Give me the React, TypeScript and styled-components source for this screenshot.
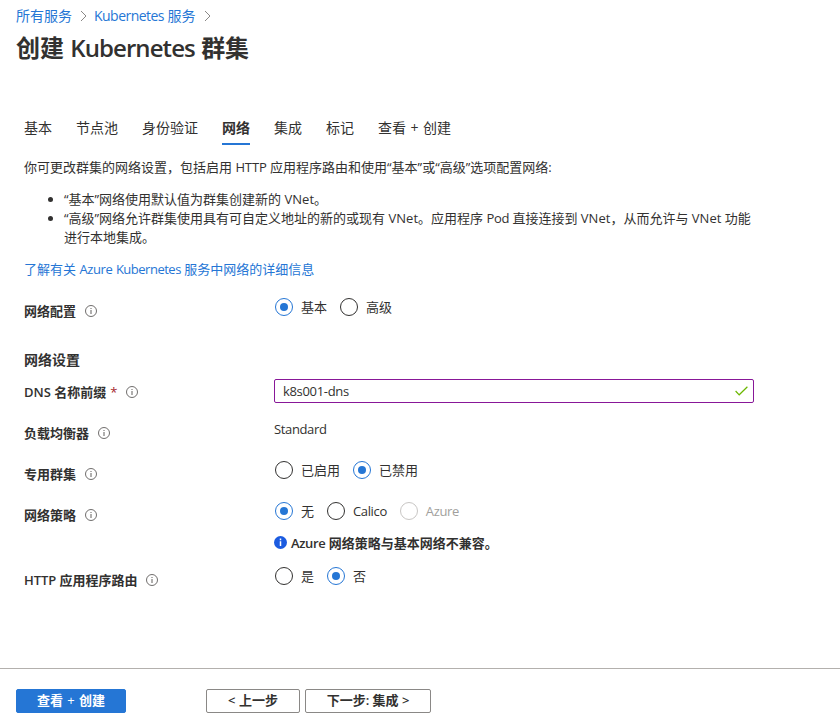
import React from 'react';
import styled, { createGlobalStyle, css } from 'styled-components';

const Global = createGlobalStyle`
  * { box-sizing: border-box; }
  body {
    margin: 0;
    background: #fff;
    color: #323130;
    font: 13px/19px "Open Sans", "Noto Sans CJK SC", sans-serif;
  }
`;

const Page = styled.div`
  width: 840px;
  height: 728px;
  display: flex;
  flex-direction: column;
  overflow: hidden;
`;
const Latin = styled.span<{ $spacing: number }>`
  letter-spacing: ${p => p.$spacing}em;
`;
const Crumbs = styled.nav`
  height: 32px;
  padding: 0 16px;
  display: flex;
  align-items: center;
  font-size: 14px;
  line-height: 20px;
`;
const Link = styled.a`
  color: #2576d5;
  text-decoration: none;
`;
const Chevron = styled.svg`
  width: 8px;
  height: 12px;
  margin: 0 7px;
  fill: none;
  stroke: #8a8886;
`;
const Title = styled.h1`
  margin: 0 16px;
  height: 34px;
  font-size: 24px;
  line-height: 32px;
  font-weight: 600;
`;
const Tabs = styled.div`
  display: flex;
  gap: 24px;
  margin: 50px 24px 0;
  height: 29px;
`;
const Tab = styled.div<{ $active?: boolean }>`
  font-size: 14px;
  line-height: 24px;
  white-space: nowrap;
  font-weight: ${p => (p.$active ? 600 : 400)};
  border-bottom: 2px solid ${p => (p.$active ? '#2576d5' : 'transparent')};
`;
const Intro = styled.section`
  padding: 13px 24px 0;
  height: 153px;
  white-space: nowrap;
`;
const Para = styled.p`
  margin: 0;
  height: 19px;
`;
const List = styled.ul`
  margin: 13px 0 13px;
  padding-left: 40px;
  line-height: 19px;
  list-style: none;
`;
const Item = styled.li`
  position: relative;
  &::before {
    content: '';
    position: absolute;
    left: -16px;
    top: 7px;
    width: 5px;
    height: 5px;
    border-radius: 50%;
    background: #323130;
  }
`;
const Form = styled.section`
  padding: 0 24px;
  height: 370px;
`;
const Row = styled.div<{ $height?: number }>`
  display: grid;
  grid-template-columns: 250px 480px;
  height: ${p => p.$height ?? 41}px;
  align-items: start;
`;
const Label = styled.div`
  display: flex;
  align-items: center;
  height: 19px;
  margin-top: 4px;
  font-weight: 600;
  white-space: pre;
`;
const Required = styled.span`
  color: #a4262c;
  margin-left: 4px;
  font-weight: 400;
`;
const HintIcon = styled.svg`
  width: 12px;
  height: 12px;
  margin: 0 0 2px 9px;
  flex: none;
`;
const SectionTitle = styled.h2`
  margin: 0;
  height: 29px;
  font-size: 14px;
  line-height: 20px;
  font-weight: 600;
`;
const Choices = styled.div`
  display: flex;
  gap: 13px;
  padding-left: 1px;
  height: 18px;
`;
const Choice = styled.label<{ $disabled?: boolean }>`
  display: flex;
  gap: 8px;
  align-items: center;
  line-height: 18px;
  color: ${p => (p.$disabled ? '#a19f9d' : '#323130')};
`;
const Dot = styled.span<{ $on?: boolean; $disabled?: boolean }>`
  display: flex;
  align-items: center;
  justify-content: center;
  width: 18px;
  height: 18px;
  border-radius: 50%;
  border: 1px solid ${p => (p.$on ? '#2576d5' : p.$disabled ? '#c8c6c4' : '#323130')};
  ${p => p.$on && css`
    &::after {
      content: '';
      width: 8px;
      height: 8px;
      border-radius: 50%;
      background: #2576d5;
    }
  `}
`;
const Field = styled.div`
  display: flex;
  align-items: center;
  justify-content: space-between;
  height: 24px;
  padding: 0 5px 0 8px;
  border: 1px solid #881798;
  border-radius: 2px;
`;
const Check = styled.svg`
  width: 13px;
  height: 10px;
  fill: none;
  stroke: #6bb700;
  stroke-width: 1.2;
`;
const Notice = styled.div`
  display: flex;
  align-items: center;
  gap: 4px;
  margin-top: 14px;
  height: 19px;
  font-weight: 600;
`;
const NoticeIcon = styled.svg`
  width: 13px;
  height: 13px;
  margin-bottom: 2px;
`;
const Footer = styled.footer`
  display: flex;
  padding: 20px 16px 0;
  border-top: 1px solid #b3b0ad;
`;
const Button = styled.button<{ $primary?: boolean; $width: number; $after?: number }>`
  width: ${p => p.$width}px;
  height: 24px;
  margin: 0 ${p => p.$after ?? 0}px 0 0;
  padding: 0 0 2px;
  font: inherit;
  font-weight: 600;
  line-height: 20px;
  white-space: nowrap;
  border-radius: 2px;
  border: 1px solid ${p => (p.$primary ? '#2576d5' : '#8a8886')};
  background: ${p => (p.$primary ? '#2576d5' : '#fff')};
  color: ${p => (p.$primary ? '#fff' : '#323130')};
`;
const Sign = styled.span`
  display: inline-block;
  width: 0.7em;
  text-align: center;
  font-weight: 400;
`;

const spacing: Record<string, number> = { Kubernetes: -0.038, VNet: 0.003, HTTP: -0.008, DNS: 0 };

/* Tunes the spacing of Latin words inside Chinese text, and gives a plus sign a fixed cell. */
const Mixed = ({ children }: { children: string }) => (
  <>
    {children.split(/([A-Za-z][A-Za-z0-9]*|\+)/).map((part, i) => {
      if (i % 2 === 0) return part;
      return part === '+'
        ? <Sign key={i}>+</Sign>
        : <Latin key={i} $spacing={spacing[part] ?? -0.028}>{part}</Latin>;
    })}
  </>
);

const Next = () => (
  <Chevron viewBox="0 0 8 12"><path d="M2 1 7 6 2 11" /></Chevron>
);
const Hint = () => (
  <HintIcon viewBox="0 0 12 12">
    <circle cx="6" cy="6" r="5.5" fill="none" stroke="#605e5c" strokeWidth=".9" />
    <path d="M6 5v4M6 3v1" stroke="#605e5c" />
  </HintIcon>
);

type Option = { text: string; on?: boolean; disabled?: boolean };
const Radios = ({ options }: { options: Option[] }) => (
  <Choices>
    {options.map(o => (
      <Choice key={o.text} $disabled={o.disabled}>
        <Dot $on={o.on} $disabled={o.disabled} />
        <span><Mixed>{o.text}</Mixed></span>
      </Choice>
    ))}
  </Choices>
);

const tabs = ['基本', '节点池', '身份验证', '网络', '集成', '标记', '查看 + 创建'];

export default function App() {
  return (
    <Page>
      <Global />
      <Crumbs>
        <Link>所有服务</Link><Next />
        <Link><Mixed>Kubernetes 服务</Mixed></Link><Next />
      </Crumbs>
      <Title><Mixed>创建 Kubernetes 群集</Mixed></Title>
      <Tabs>
        {tabs.map(t => <Tab key={t} $active={t === '网络'}><Mixed>{t}</Mixed></Tab>)}
      </Tabs>
      <Intro>
        <Para><Mixed>你可更改群集的网络设置，包括启用 HTTP 应用程序路由和使用“基本”或“高级”选项配置网络:</Mixed></Para>
        <List>
          <Item><Mixed>“基本”网络使用默认值为群集创建新的 VNet。</Mixed></Item>
          <Item>
            <Mixed>“高级”网络允许群集使用具有可自定义地址的新的或现有 VNet。应用程序 Pod 直接连接到 VNet，从而允许与 VNet 功能</Mixed>
            <br />进行本地集成。
          </Item>
        </List>
        <Link><Mixed>了解有关 Azure Kubernetes 服务中网络的详细信息</Mixed></Link>
      </Intro>
      <Form>
        <Row $height={52}>
          <Label>网络配置<Hint /></Label>
          <Radios options={[{ text: '基本', on: true }, { text: '高级' }]} />
        </Row>
        <SectionTitle>网络设置</SectionTitle>
        <Row>
          <Label><Mixed>DNS 名称前缀</Mixed><Required>*</Required><Hint /></Label>
          <Field>
            <Latin $spacing={-0.025}>k8s001-dns</Latin>
            <Check viewBox="0 0 13 10"><path d="M.6 5 4.2 8.8 12.4.8" /></Check>
          </Field>
        </Row>
        <Row>
          <Label>负载均衡器<Hint /></Label>
          <div><Mixed>Standard</Mixed></div>
        </Row>
        <Row>
          <Label>专用群集<Hint /></Label>
          <Radios options={[{ text: '已启用' }, { text: '已禁用', on: true }]} />
        </Row>
        <Row $height={65}>
          <Label>网络策略<Hint /></Label>
          <div>
            <Radios options={[{ text: '无', on: true }, { text: 'Calico' }, { text: 'Azure', disabled: true }]} />
            <Notice>
              <NoticeIcon viewBox="0 0 13 13">
                <circle cx="6.5" cy="6.5" r="6.5" fill="#1b5be0" />
                <path d="M6.5 5.3v4.6M6.5 2.6v1.6" stroke="#fff" strokeWidth="1.5" />
              </NoticeIcon>
              <span><Mixed>Azure 网络策略与基本网络不兼容。</Mixed></span>
            </Notice>
          </div>
        </Row>
        <Row>
          <Label><Mixed>HTTP 应用程序路由</Mixed><Hint /></Label>
          <Radios options={[{ text: '是' }, { text: '否', on: true }]} />
        </Row>
      </Form>
      <Footer>
        <Button $primary $width={110} $after={80}><Mixed>查看 + 创建</Mixed></Button>
        <Button $width={94} $after={5}>&lt; 上一步</Button>
        <Button $width={126}>下一步: 集成 &gt;</Button>
      </Footer>
    </Page>
  );
}
